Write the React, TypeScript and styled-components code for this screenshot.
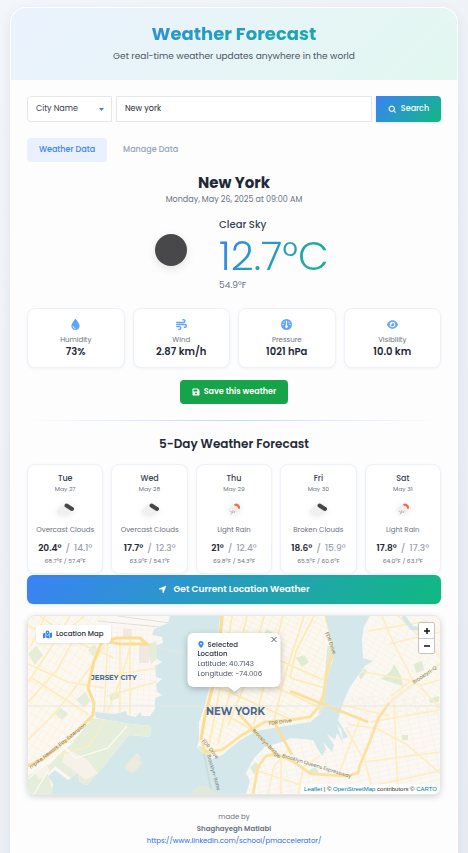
import React, { useState } from 'react';
import styled, { createGlobalStyle, css } from 'styled-components';
import {
  FaDroplet,
  FaWind,
  FaGauge,
  FaEye,
  FaFloppyDisk,
  FaLocationArrow,
  FaLocationDot,
  FaMapLocationDot,
} from 'react-icons/fa6';
import { BiSearch } from 'react-icons/bi';

const GlobalStyle = createGlobalStyle`
  *, *::before, *::after { box-sizing: border-box; }
  body {
    margin: 0;
    background: linear-gradient(135deg, #f3f6fa 0%, #e9edf3 100%);
    color: #1f2937;
    font-family: Poppins, Inter, sans-serif;
  }
  button, input, select { font: inherit; margin: 0; }
  h1, h2, h3, p { margin: 0; }
`;

const brandGradient = 'linear-gradient(135deg, #3b82f6 0%, #10b981 100%)';

const gradientText = css`
  background: ${brandGradient};
  background-clip: text;
  -webkit-background-clip: text;
  color: transparent;
`;

const Shell = styled.main`
  margin: 7px 10px 0;
  min-height: calc(100vh - 7px);
  border: 1px solid #ffffff;
  border-bottom: 0;
  border-radius: 16px 16px 0 0;
  background: #fdfdfe;
  box-shadow: 0 4px 14px rgba(30, 50, 90, 0.08);
  overflow: hidden;
`;

const Header = styled.header`
  padding: 12px 16px 16px;
  background: linear-gradient(135deg, #ebf2fe 0%, #e2f7f0 100%);
  text-align: center;
`;

const Title = styled.h1`
  font-size: 18px;
  line-height: 27px;
  font-weight: 700;
  ${gradientText}
`;

const Subtitle = styled.p`
  margin-top: 2px;
  font-size: 9px;
  line-height: 15px;
  color: #4b5563;
`;

const Content = styled.div`
  padding: 16px;
`;

const SearchRow = styled.form`
  display: flex;
  gap: 4px;
  height: 26px;
`;

const SelectWrap = styled.label`
  position: relative;
  flex: 0 0 85px;
  display: flex;

  svg {
    position: absolute;
    right: 8px;
    top: 12px;
    width: 5px;
    height: 3px;
    fill: #3b82f6;
    pointer-events: none;
  }
`;

const fieldStyle = css`
  border: 1px solid #e5e7eb;
  background: #ffffff;
  color: #1f2937;
  font-size: 8px;
  line-height: 12px;
  padding: 0 8px;
  outline: none;
`;

const Select = styled.select`
  ${fieldStyle}
  appearance: none;
  width: 100%;
  color: #374151;
  border-radius: 4px 0 0 4px;
`;

const SearchInput = styled.input`
  ${fieldStyle}
  flex: 1;
  min-width: 0;
  border-radius: 0;
`;

const SearchButton = styled.button`
  display: flex;
  align-items: center;
  justify-content: center;
  gap: 4px;
  flex: 0 0 65px;
  border: 0;
  border-radius: 0 4px 4px 0;
  background: ${brandGradient};
  box-shadow: 0 1px 3px rgba(0, 0, 0, 0.1);
  color: #ffffff;
  font-size: 8px;
  font-weight: 500;
  cursor: pointer;
  padding: 0;

  svg { stroke: currentColor; stroke-width: 1; }
`;

const Tabs = styled.div`
  display: flex;
  gap: 4px;
  margin-top: 16px;
`;

const Tab = styled.button<{ $active: boolean }>`
  height: 24px;
  padding: 0 12px;
  border: 0;
  border-radius: 4px;
  background: ${(p) => (p.$active ? '#e9f1fe' : 'transparent')};
  color: ${(p) => (p.$active ? '#3b82f6' : '#94a3b8')};
  font-size: 8px;
  font-weight: 500;
  cursor: pointer;
`;

const Place = styled.h2`
  margin-top: 10px;
  text-align: center;
  font-size: 15px;
  line-height: 22px;
  font-weight: 700;
`;

const DateLine = styled.p`
  margin-top: 1px;
  text-align: center;
  font-size: 8px;
  line-height: 10px;
  color: #6b7280;
`;

const Current = styled.section`
  display: flex;
  justify-content: center;
  align-items: center;
  gap: 16px;
  margin-top: 13px;
`;

const CurrentIcon = styled.svg`
  width: 64px;
  height: 64px;
  margin-bottom: 8px;
  filter: drop-shadow(0 3px 4px rgba(0, 0, 0, 0.1));
`;

const Condition = styled.p`
  font-size: 10px;
  line-height: 14px;
  font-weight: 500;
  color: #374151;
`;

const Temperature = styled.p`
  font-size: 40px;
  line-height: 48px;
  font-weight: 300;
  ${gradientText}
`;

const Fahrenheit = styled.p`
  font-size: 9px;
  line-height: 10px;
  color: #6b7280;
`;

const Metrics = styled.section`
  display: grid;
  grid-template-columns: repeat(4, 1fr);
  gap: 8px;
  margin-top: 18px;
`;

const panelStyle = css`
  background: #ffffff;
  border: 1px solid #eef2f8;
  border-radius: 8px;
  box-shadow: 0 1px 3px rgba(30, 60, 110, 0.06);
  text-align: center;
`;

const MetricCard = styled.div`
  ${panelStyle}
  padding: 10px 4px 8px;

  svg {
    display: block;
    margin: 0 auto 5px;
    width: 11px;
    height: 11px;
    color: #60a5fa;
  }
`;

const MetricLabel = styled.p`
  font-size: 7px;
  line-height: 10px;
  color: #6b7280;
`;

const MetricValue = styled.p`
  font-size: 10px;
  line-height: 14px;
  font-weight: 600;
`;

const SaveButton = styled.button`
  display: flex;
  align-items: center;
  gap: 4px;
  height: 24px;
  margin: 12px auto 0;
  padding: 0 12px;
  border: 0;
  border-radius: 4px;
  background: #16a34a;
  color: #ffffff;
  font-size: 8px;
  font-weight: 600;
  cursor: pointer;
`;

const Divider = styled.hr`
  height: 1px;
  margin: 16px 0 13px;
  border: 0;
  background: linear-gradient(90deg, transparent, #bfd9fb, transparent);
`;

const SectionTitle = styled.h3`
  margin-bottom: 10px;
  text-align: center;
  font-size: 12px;
  line-height: 20px;
  font-weight: 600;
`;

const Days = styled.section`
  display: grid;
  grid-template-columns: repeat(5, 1fr);
  gap: 8px;
`;

const DayCard = styled.article`
  ${panelStyle}
  padding: 8px 0 7px;
  white-space: nowrap;
  color: #6b7280;
`;

const DayName = styled.p`
  font-size: 8px;
  line-height: 11px;
  font-weight: 500;
  color: #374151;
`;

const DayText = styled.p`
  font-size: 7px;
  line-height: 10px;
`;

const DayDate = styled.p`
  font-size: 6px;
  line-height: 10px;
`;

const DayIcon = styled.svg`
  display: block;
  width: 28px;
  height: 24px;
  margin: 3px auto 4px;
  filter: drop-shadow(0 1px 3px rgba(0, 0, 0, 0.1));
`;

const DayTemps = styled.p`
  display: flex;
  justify-content: center;
  gap: 4px;
  margin: 6px 0 1px;
  font-size: 9px;
  line-height: 14px;
  font-weight: 500;
  color: #9ca3af;

  strong {
    font-weight: 600;
    color: #1f2937;
  }
`;

const LocateButton = styled.button`
  display: flex;
  align-items: center;
  justify-content: center;
  gap: 6px;
  width: 100%;
  height: 29px;
  margin-top: 1px;
  padding: 0 6px 1px;
  border: 0;
  border-radius: 6px;
  background: ${brandGradient};
  box-shadow: 0 1px 3px rgba(0, 0, 0, 0.1);
  color: #ffffff;
  font-size: 9px;
  font-weight: 600;
  cursor: pointer;
`;

const MapFrame = styled.section`
  position: relative;
  height: 180px;
  margin-top: 11px;
  border: 1px solid #e5e7eb;
  border-radius: 8px;
  overflow: hidden;
  box-shadow: 0 2px 6px rgba(0, 0, 0, 0.16);
`;

const MapArt = styled.svg`
  display: block;
  width: 100%;
  height: 100%;
`;

const MapTitle = styled.div`
  position: absolute;
  left: 8px;
  top: 9px;
  display: flex;
  align-items: center;
  gap: 4px;
  height: 18px;
  padding: 0 8px 0 7px;
  border-radius: 4px;
  background: #ffffff;
  box-shadow: 0 1px 3px rgba(0, 0, 0, 0.08);
  font-size: 7px;
  font-weight: 500;

  svg { color: #3b82f6; width: 9px; height: 9px; }
`;

const Popup = styled.div`
  position: absolute;
  left: 50%;
  top: 17px;
  width: 93px;
  height: 54px;
  transform: translateX(-50%);
  padding: 7px 14px 7px 10px;
  border-radius: 6px;
  background: #ffffff;
  filter: drop-shadow(0 2px 3px rgba(0, 0, 0, 0.25));
  font-size: 7px;
  line-height: 10px;
  color: #4b5563;
  white-space: nowrap;

  &::after {
    content: '';
    position: absolute;
    left: 50%;
    top: 100%;
    transform: translateX(-50%);
    border: 6px solid transparent;
    border-top: 5px solid #ffffff;
    border-bottom: 0;
  }
`;

const PopupTitle = styled.p`
  padding-right: 16px;
  line-height: 9px;
  font-weight: 500;
  color: #1f2937;
  margin-bottom: 1px;
  white-space: normal;

  svg { color: #3b82f6; margin-right: 3px; vertical-align: -1px; }
`;

const CloseButton = styled.button`
  position: absolute;
  right: 2px;
  top: 2px;
  width: 9px;
  height: 9px;
  padding: 1px;
  border: 0;
  background: none;
  cursor: pointer;

  svg { display: block; width: 7px; height: 7px; stroke: #5b6069; }
`;

const ZoomBar = styled.div`
  position: absolute;
  right: 5px;
  top: 6px;
  width: 17px;
  border: 1px solid #c6c4bf;
  border-radius: 2px;
  overflow: hidden;
`;

const ZoomButton = styled.button`
  display: flex;
  align-items: center;
  justify-content: center;
  width: 100%;
  height: 15px;
  padding: 0;
  border: 0;
  background: #ffffff;
  cursor: pointer;

  & + & { border-top: 1px solid #cccccc; }
  svg { width: 6px; height: 6px; stroke: #111111; stroke-width: 2; }
`;

const Attribution = styled.p`
  position: absolute;
  right: 0;
  bottom: 0;
  padding: 0 3px;
  background: rgba(255, 255, 255, 0.8);
  font: 6px/10px 'Liberation Sans', sans-serif;
  color: #333333;

  a { color: #0078a8; text-decoration: none; }
`;

const Footer = styled.footer`
  margin-top: 16px;
  text-align: center;
  font-size: 7px;
  line-height: 12px;
  color: #6b7280;

  strong { display: block; font-weight: 600; }
  a { color: #2f6bea; text-decoration: none; }
`;

const metrics = [
  { icon: <FaDroplet />, label: 'Humidity', value: '73%' },
  { icon: <FaWind />, label: 'Wind', value: '2.87 km/h' },
  { icon: <FaGauge />, label: 'Pressure', value: '1021 hPa' },
  { icon: <FaEye />, label: 'Visibility', value: '10.0 km' },
];

const days = [
  { day: 'Tue', date: 'May 27', kind: 'cloud', text: 'Overcast Clouds', hi: '20.4°', lo: '14.1°', f: '68.7°F / 57.4°F' },
  { day: 'Wed', date: 'May 28', kind: 'cloud', text: 'Overcast Clouds', hi: '17.7°', lo: '12.3°', f: '63.9°F / 54.1°F' },
  { day: 'Thu', date: 'May 29', kind: 'rain', text: 'Light Rain', hi: '21°', lo: '12.4°', f: '69.8°F / 54.3°F' },
  { day: 'Fri', date: 'May 30', kind: 'cloud', text: 'Broken Clouds', hi: '18.6°', lo: '15.9°', f: '65.5°F / 60.6°F' },
  { day: 'Sat', date: 'May 31', kind: 'rain', text: 'Light Rain', hi: '17.8°', lo: '17.3°', f: '64.0°F / 63.1°F' },
];

function ForecastIcon({ kind }: { kind: string }) {
  return kind === 'cloud' ? (
    <DayIcon viewBox="0 0 28 24" aria-hidden="true">
      <path d="M8 17.500a2.800 2.800 0 0 1 0-5.500 4 4 0 0 1 6.500-2 4.500 4.500 0 0 1 4.500 4 2 2 0 0 1-1 3.500z" fill="#f0f0f0" />
      <path d="M15.500 8.500l5.500 3.500" stroke="#484849" strokeWidth="4" strokeLinecap="round" />
    </DayIcon>
  ) : (
    <DayIcon viewBox="0 0 28 24" aria-hidden="true">
      <path d="M13.500 8a3.400 3.400 0 1 1 5.500 4.500l-2-3z" fill="#ec6e4c" />
      <path d="M10 15.500a2.800 2.800 0 0 1 0-5 3.500 3.500 0 0 1 5-1.500 3.500 3.500 0 0 1 3 4 1.500 1.500 0 0 1-.5 2.500z" fill="#efefef" />
      <path d="M10.500 14l1 1.500M13 13.500l-1 3M15 14l-1 2M11.500 16.500l-.5 1" stroke="#8c8c90" strokeWidth=".6" />
    </DayIcon>
  );
}

function CityMap() {
  return (
    <MapArt viewBox="0 0 412 178" preserveAspectRatio="xMidYMid slice" role="img" aria-label="Map of New York">
      <defs>
        <pattern id="jersey" width="9" height="6" patternUnits="userSpaceOnUse" patternTransform="rotate(-58)">
          <path d="M0 0H9M0 0V6" stroke="#fdf0cc" strokeWidth="1.200" fill="none" />
        </pattern>
        <pattern id="jerseyDowntown" width="6" height="5" patternUnits="userSpaceOnUse" patternTransform="rotate(4)">
          <path d="M0 0H6M0 0V5" stroke="#f6efe6" strokeWidth="1.200" fill="none" />
        </pattern>
        <pattern id="manhattan" width="8" height="5" patternUnits="userSpaceOnUse" patternTransform="rotate(28)">
          <path d="M0 0H8M0 0V5" stroke="#fceec8" strokeWidth="1.100" fill="none" />
        </pattern>
        <pattern id="brooklyn" width="10" height="5" patternUnits="userSpaceOnUse" patternTransform="rotate(-12)">
          <path d="M0 0H10M0 0V5" stroke="#f5eee5" strokeWidth="1.200" fill="none" />
        </pattern>
        <pattern id="williamsburg" width="8" height="5" patternUnits="userSpaceOnUse" patternTransform="rotate(30)">
          <path d="M0 0H8M0 0V5" stroke="#f8f0e0" strokeWidth="1.200" fill="none" />
        </pattern>
        <clipPath id="jerseyShore">
          <path id="jerseyLand" d="M0 0H142L140 7 126 13 124 19 134 21 135 27 129 29 129 43 134 46 127 50 128 61 134 63 128 68 129 76 134 79 127 82 127 93 122 100 114 100 112 96 108 101 99 99 98 95 87 98 67 96 68 102 85 105 103 108 123 110 122 121 113 120 101 119 90 132 77 149 59 169 52 166 50 157 40 164 27 154 20 160 25 168 23 178H0Z" />
        </clipPath>
        <clipPath id="manhattanShore">
          <path id="manhattanLand" d="M192 0H299V8L305 30 305 43 299 62 297 84 292 98 282 106 262 109 245 112 228 115 211 125 194 139 183 143 176 138 169 131 171 124 171 106 177 89 182 70 190 24Z" />
        </clipPath>
        <clipPath id="brooklynShore">
          <path id="brooklynLand" d="M342 0H412V178H218L222 165 218 157 226 142 237 131 257 125 262 122 285 124 288 130 294 140 298 133 295 126 304 136 306 129 299 118 307 124 309 117 316 128 309 109 313 113 315 123 320 121 310 104 315 87 322 71 337 50 345 45 335 42 334 24 336 10Z" />
        </clipPath>
      </defs>
      <rect width="412" height="178" fill="#d4e8ec" />
      <g fill="#fbf8f3">
        <use href="#jerseyLand" />
        <use href="#manhattanLand" />
        <use href="#brooklynLand" />
      </g>
      <g clipPath="url(#jerseyShore)">
        <path d="M0 0H82L64 50 60 98 20 145 0 150Z" fill="url(#jersey)" />
        <path d="M78 8H136V100H66V40Z" fill="url(#jerseyDowntown)" />
        <path d="M64 102L124 110 122 121 101 119 77 149 59 171 40 160 27 150 20 158 26 180H0V160L22 148 50 120Z" fill="#e4eedb" />
        <path d="M38 132l22 12 10 13-12 7-24-18z M6 155l12-7 5 8-12 8z" fill="#f6f1e9" />
        <path d="M0 38l8-8 7 9-8 10zM48 84l9-8 6 9-7 6zM118 29l10-4 4 15-9 8zM82 78l9-3v7l-9 3zM27 98l6-6 7 6-6 6zM60 34l6-5 5 5-6 6z" fill="#e4edda" />
        <path d="M111 27h10v20h-10zM95 13h9v8h-9z" fill="#f1e8df" />
        <g fill="none" stroke="#fdecbc" strokeWidth="1.600">
          <path d="M0 66L24 30 42 0M17 0L3 30M0 124L28 96 65 48 76 30M12 0L46 25 86 42M0 86L29 54 52 12M28 140L61 130 76 105 93 62 104 25M79 80L128 66M76 60L130 52M0 48L40 66 76 72M0 10L32 22 56 0M4 62L60 98M80 22L76 98M102 22V98M92 22V98" />
        </g>
        <path d="M0 150L15 143 38 125 54 110 65 99 66 87 60 72 66 45 74 26 89 22 112 22 119 28 92 28 76 25" fill="none" stroke="#fcdd94" strokeWidth="3" />
        <path d="M29 125L48 142 80 132 99 110M0 163L45 126M6 178L20 155" fill="none" stroke="#fbfaf3" strokeWidth="1.200" />
        <path d="M70 5L142 12M90 0L142 7" fill="none" stroke="#dfe0da" strokeWidth="1" />
      </g>
      <path d="M96 151l10-11 8 7-10 11zM106 140l3-3 4 4-3 3z" fill="#efe9e0" stroke="#e1edd7" />
      <g clipPath="url(#manhattanShore)">
        <path d="M165 0H310V145H165Z" fill="url(#manhattan)" />
        <path d="M268 42l8-3 5 7-7 5zM204 68l7 3-3 7-6-3zM239 13l5 3-4 7-4-4zM170 130l7 1 8 10-10-1z" fill="#e0ebd4" />
        <path d="M302 30L299 62 296 82 293 98" fill="none" stroke="#dfead2" strokeWidth="5" />
        <g fill="none" stroke="#fdebb6" strokeWidth="1.700">
          <path d="M204 0L192 72 181 130M219 0L204 66 190 128M236 0L220 60 200 110M255 0L239 58 226 108M276 0L256 62 245 110M192 18L300 66M190 45L298 94M187 70L262 103M262 62L297 72M180 88L221 112M286 0L268 35 262 62" />
        </g>
        <path d="M194 0L189 55 183 77 177 100 173 124" fill="none" stroke="#fcdd94" strokeWidth="3.200" />
        <path d="M174 125L177 136 194 134 214 119 237 106 262 104 282 101 290 92 297 76 298 59 305 37 304 24 298 0" fill="none" stroke="#fce29f" strokeWidth="2.800" />
      </g>
      <g clipPath="url(#brooklynShore)">
        <path d="M210 80H412V178H210Z" fill="url(#brooklyn)" />
        <path d="M305 0H412V100H305Z" fill="url(#williamsburg)" />
        <path d="M353 63l10-8 3-7 7 12 2 10zM386 48l8-3 2 9-8 3zM331 59l6-7 2 4-7 8zM401 83l10-3v6l-9 1zM374 119h6v5h-6zM281 154l6-3 4 5-7 3zM222 151l6-5 5 5-7 8z" fill="#e0ebd4" />
        <g fill="none" stroke="#fdedc0" strokeWidth="1.600">
          <path d="M354 0L365 26 384 62 412 92M361 28L412 16M384 64L363 80M342 106L412 94M320 108L350 113 378 128 412 157M325 174L412 155M336 146L412 136M318 112L336 144 346 178M366 88L370 178M390 70L412 64M333 100L310 160M240 178L246 150 262 132M253 178L253 140M270 178L276 150 292 140M230 155L300 178M310 88L362 100M332 55L385 65M370 0L412 40M340 15L400 5" />
        </g>
        <path d="M412 48L388 66 361 87" fill="none" stroke="#faefcf" strokeWidth="3" />
        <path d="M361 87L350 103 342 125 332 149 330 157 318 160 283 158 266 146 249 138 238 140 230 151 225 178" fill="none" stroke="#fce2a2" strokeWidth="2.800" />
        <path d="M375 0L384 12 397 13" fill="none" stroke="#d4e8ec" strokeWidth="4" />
      </g>
      <g fill="none">
        <path d="M262 75L292 87 340 106M211 98L246 136M245 104L264 139" stroke="#fbdf9c" strokeWidth="2.800" />
        <path d="M176 138L184 178" stroke="#c9ddde" strokeWidth="2" />
        <path d="M127 31L159 38M0 90H412" stroke="#e6e7df" strokeWidth="1" />
      </g>
      <path d="M162 178l8-8h10l8 8z" fill="#dfebd8" />
      <g fill="#78796f" fontFamily="Poppins, Inter, sans-serif" fontSize="5">
        <text transform="translate(3 153) rotate(-38)">rnpike Newark Bay Extension</text>
        <text transform="translate(297 17) rotate(69)">FDR Drive</text>
        <text transform="translate(241 109) rotate(-7)">FDR Drive</text>
        <text transform="translate(174 125) rotate(52)">FDR Drive</text>
        <text transform="translate(224 115) rotate(46)">Brooklyn Bridge</text>
        <text transform="translate(179 139) rotate(74)">Brooklyn-Batte</text>
        <text transform="translate(254 141) rotate(17)">Brooklyn Queens Expressway</text>
        <text transform="translate(386 68) rotate(-34)">Brooklyn-Q</text>
      </g>
      <g fill="#486890" fontFamily="Montserrat, Inter, sans-serif" fontWeight="700">
        <text x="63" y="64" fontSize="7">JERSEY CITY</text>
        <text x="178" y="99" fontSize="10">NEW YORK</text>
      </g>
    </MapArt>
  );
}

export default function App() {
  const [query, setQuery] = useState('New york');
  const [tab, setTab] = useState(0);
  const [popupOpen, setPopupOpen] = useState(true);

  return (
    <>
      <GlobalStyle />
      <Shell>
        <Header>
          <Title>Weather Forecast</Title>
          <Subtitle>Get real-time weather updates anywhere in the world</Subtitle>
        </Header>
        <Content>
          <SearchRow onSubmit={(e) => e.preventDefault()}>
            <SelectWrap>
              <Select aria-label="Search type">
                <option>City Name</option>
              </Select>
              <svg viewBox="0 0 5 3" aria-hidden="true"><path d="M0 0h5L2.500 3z" /></svg>
            </SelectWrap>
            <SearchInput aria-label="Location" value={query} onChange={(e) => setQuery(e.target.value)} />
            <SearchButton type="submit"><BiSearch size={9} />Search</SearchButton>
          </SearchRow>
          <Tabs role="tablist">
            {['Weather Data', 'Manage Data'].map((name, i) => (
              <Tab key={name} type="button" role="tab" aria-selected={tab === i} $active={tab === i} onClick={() => setTab(i)}>
                {name}
              </Tab>
            ))}
          </Tabs>
          <Place>New York</Place>
          <DateLine>Monday, May 26, 2025 at 09:00 AM</DateLine>
          <Current>
            <CurrentIcon viewBox="0 0 64 64" aria-hidden="true"><circle cx="32" cy="32" r="16" fill="#48484a" /></CurrentIcon>
            <div>
              <Condition>Clear Sky</Condition>
              <Temperature>12.7°C</Temperature>
              <Fahrenheit>54.9°F</Fahrenheit>
            </div>
          </Current>
          <Metrics>
            {metrics.map((m) => (
              <MetricCard key={m.label}>
                {m.icon}
                <MetricLabel>{m.label}</MetricLabel>
                <MetricValue>{m.value}</MetricValue>
              </MetricCard>
            ))}
          </Metrics>
          <SaveButton type="button"><FaFloppyDisk size={8} />Save this weather</SaveButton>
          <Divider />
          <SectionTitle>5-Day Weather Forecast</SectionTitle>
          <Days>
            {days.map((d) => (
              <DayCard key={d.day}>
                <DayName>{d.day}</DayName>
                <DayDate>{d.date}</DayDate>
                <ForecastIcon kind={d.kind} />
                <DayText>{d.text}</DayText>
                <DayTemps><strong>{d.hi}</strong><span>/</span><span>{d.lo}</span></DayTemps>
                <DayDate>{d.f}</DayDate>
              </DayCard>
            ))}
          </Days>
          <LocateButton type="button"><FaLocationArrow size={9} />Get Current Location Weather</LocateButton>
          <MapFrame>
            <CityMap />
            <MapTitle><FaMapLocationDot />Location Map</MapTitle>
            {popupOpen && (
              <Popup>
                <PopupTitle><FaLocationDot size={7} />Selected Location</PopupTitle>
                <p>Latitude: 40.7143</p>
                <p>Longitude: -74.006</p>
                <CloseButton type="button" aria-label="Close popup" onClick={() => setPopupOpen(false)}>
                  <svg viewBox="0 0 7 7"><path d="M1 1l5 5M6 1L1 6" /></svg>
                </CloseButton>
              </Popup>
            )}
            <ZoomBar>
              <ZoomButton type="button" aria-label="Zoom in"><svg viewBox="0 0 8 8"><path d="M0 4h8M4 0v8" /></svg></ZoomButton>
              <ZoomButton type="button" aria-label="Zoom out"><svg viewBox="0 0 8 8"><path d="M0 4h8" /></svg></ZoomButton>
            </ZoomBar>
            <Attribution>
              <a href="https://leafletjs.com">Leaflet</a> | © <a href="https://www.openstreetmap.org/copyright">OpenStreetMap</a> contributors © <a href="https://carto.com/attributions">CARTO</a>
            </Attribution>
          </MapFrame>
          <Footer>
            <p>made by</p>
            <strong>Shaghayegh Matlabi</strong>
            <a href="https://www.linkedin.com/school/pmaccelerator/">https://www.linkedin.com/school/pmaccelerator/</a>
          </Footer>
        </Content>
      </Shell>
    </>
  );
}
